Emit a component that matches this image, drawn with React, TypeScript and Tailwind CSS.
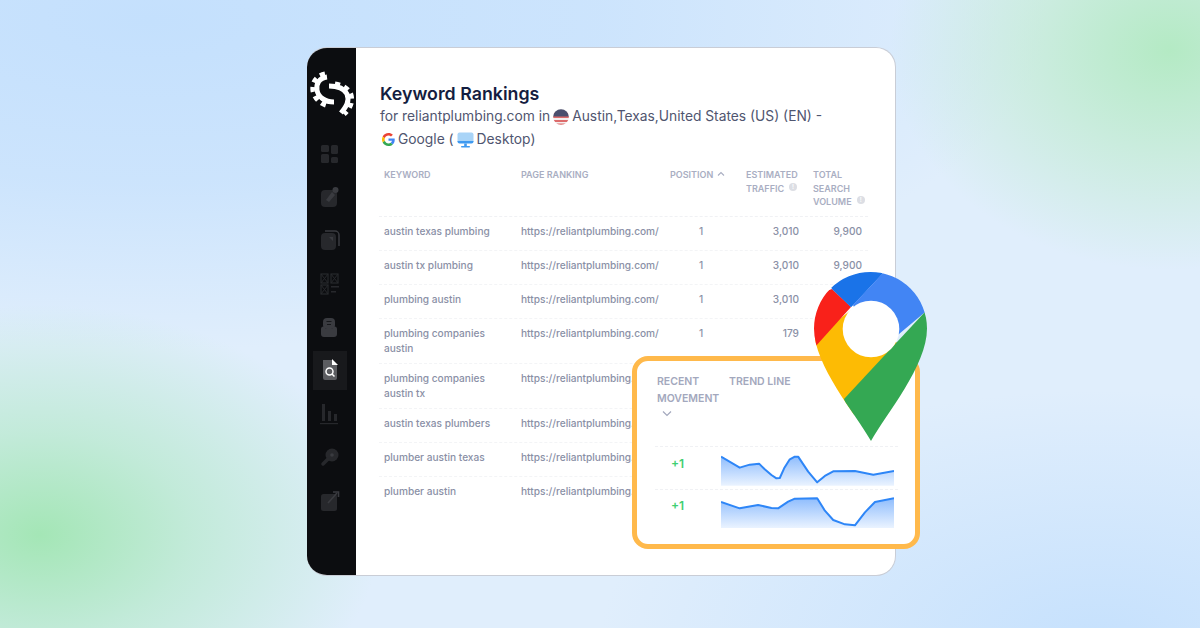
import React from "react";

const rows: [string[], string, string, string][] = [
  [["austin texas plumbing"], "1", "3,010", "9,900"],
  [["austin tx plumbing"], "1", "3,010", "9,900"],
  [["plumbing austin"], "1", "3,010", ""],
  [["plumbing companies", "austin"], "1", "179", ""],
  [["plumbing companies", "austin tx"], "", "", ""],
  [["austin texas plumbers"], "", "", ""],
  [["plumber austin texas"], "", "", ""],
  [["plumber austin"], "", "", ""],
];

function Info() {
  return (
    <span className="inline-flex w-[8px] h-[8px] rounded-full bg-[#dcdee4] text-white text-[6px] leading-[8px] justify-center ml-[5px] align-[3px]">!</span>
  );
}

function Logo() {
  return (
    <svg width="46" height="48" viewBox="309 70 46 48">
      <g fill="none" stroke="#fff">
        <path d="M327 76 C319 77 316 83 317 89 C318 96 325 101 334 101" strokeWidth="5" />
        <path d="M325 73 C315 75 312 83 313 90 C315 98 321 104 330 105" strokeWidth="5" strokeDasharray="5 4.500" />
        <path d="M329 85 C337 85 344 87 347 93 C350 100 346 106 341 112" strokeWidth="5" />
        <path d="M335 83 C343 84 349 88 351 94 C353 101 350 108 344 113" strokeWidth="5" strokeDasharray="5 4.500" />
      </g>
    </svg>
  );
}

function NavIcon({ children, active }: { children: React.ReactNode; active?: boolean }) {
  return (
    <div className={"w-[34px] h-[39px] flex items-center justify-center " + (active ? "bg-[#18191c]" : "")}>
      <svg width="20" height="22" viewBox="0 0 20 22">{children}</svg>
    </div>
  );
}

const c = "#27282c";
const h = "#3a3b40";

function Sidebar() {
  return (
    <div className="w-[49px] shrink-0 bg-[#0c0d10] flex flex-col items-center">
      <div className="mt-[23px] mb-[15px]"><Logo /></div>
      <div className="flex flex-col items-center gap-[4.400px] pr-[3px]">
        <NavIcon>
          <rect x="1" y="2" width="8" height="7" rx="1.500" fill={c} />
          <rect x="11" y="2" width="7" height="9" rx="1.500" fill={c} />
          <rect x="1" y="11" width="8" height="9" rx="1.500" fill={c} />
          <rect x="11" y="14" width="7" height="6" rx="1.500" fill={c} />
        </NavIcon>
        <NavIcon>
          <rect x="1" y="4" width="16" height="17" rx="4" fill={c} />
          <path d="M6 14 L12 6 L15 9 L9 16 Z" fill={h} />
          <circle cx="15.500" cy="4" r="3" fill={h} />
        </NavIcon>
        <NavIcon>
          <rect x="1" y="4" width="15" height="17" rx="4" fill={c} />
          <path d="M5 2 H15 A4 4 0 0 1 19 6 V17" fill="none" stroke={h} strokeWidth="1.500" />
          <path d="M9 8 L13 8 L13 12 Z" fill={h} />
        </NavIcon>
        <NavIcon>
          <rect x="1" y="1" width="7" height="9" fill="none" stroke={c} strokeWidth="1.200" />
          <path d="M1 1 L8 10 M8 1 L1 10" stroke={c} strokeWidth="1" />
          <rect x="1" y="12" width="7" height="9" fill="none" stroke={c} strokeWidth="1.200" />
          <path d="M1 12 L8 21 M8 12 L1 21" stroke={c} strokeWidth="1" />
          <rect x="11" y="1" width="7" height="9" fill="none" stroke={c} strokeWidth="1.200" />
          <path d="M11 1 L18 10 M18 1 L11 10" stroke={c} strokeWidth="1" />
          <rect x="11" y="13" width="8" height="1.500" fill={c} />
          <rect x="11" y="18" width="5" height="1.500" fill={c} />
        </NavIcon>
        <NavIcon>
          <rect x="3" y="2" width="12" height="11" rx="4" fill={h} />
          <rect x="6.500" y="5" width="5" height="1" fill="#17181b" />
          <rect x="7" y="8" width="4" height="1" fill="#17181b" />
          <path d="M1 13 A2.500 2.500 0 0 1 3.500 10.500 L6 13 H12 L14.500 10.500 A2.500 2.500 0 0 1 17 13 V18 A3 3 0 0 1 14 21 H4 A3 3 0 0 1 1 18 Z" fill={h} />
        </NavIcon>
        <NavIcon active>
          <path d="M3 1 H12 L17 6 V19 A2 2 0 0 1 15 21 H5 A2 2 0 0 1 3 19 Z" fill="#5b5c60" />
          <path d="M12 0 L18 6 H12 Z" fill="#ffffff" />
          <circle cx="9.500" cy="12.500" r="3.500" fill="none" stroke="#fff" strokeWidth="1.500" />
          <path d="M12 15 L14.500 17.500" stroke="#fff" strokeWidth="1.500" />
        </NavIcon>
        <NavIcon>
          <rect x="2" y="1" width="3" height="17" fill={c} />
          <rect x="8" y="8" width="3" height="10" fill={c} />
          <rect x="14" y="11" width="3" height="7" fill={c} />
          <rect x="0" y="20" width="18" height="1.200" fill={c} />
        </NavIcon>
        <NavIcon>
          <circle cx="12" cy="9" r="6.500" fill={c} />
          <circle cx="12" cy="9" r="1.800" fill={h} />
          <path d="M8 13 L3 18" stroke={c} strokeWidth="3.500" strokeLinecap="round" />
        </NavIcon>
        <NavIcon>
          <rect x="1" y="4" width="16" height="17" rx="2.500" fill={c} />
          <path d="M8 13 L17 3" stroke={h} strokeWidth="1.600" />
          <path d="M13 2 H18.500 V7" fill="none" stroke={h} strokeWidth="1.600" />
        </NavIcon>
      </div>
    </div>
  );
}

function Flag() {
  return (
    <svg width="16" height="16" viewBox="0 0 16 16" className="mx-[3px] shrink-0">
      <defs><clipPath id="f"><circle cx="8" cy="8" r="7.800" /></clipPath></defs>
      <g clipPath="url(#f)">
        <rect width="16" height="16" fill="#f3eeee" />
        <rect y="3" width="16" height="2" fill="#dd6b6b" />
        <rect y="7" width="16" height="2" fill="#dd6b6b" />
        <rect y="11" width="16" height="2" fill="#dd6b6b" />
        <rect y="14.500" width="16" height="2" fill="#dd6b6b" />
        <rect width="16" height="7.500" fill="#4a4f6e" />
      </g>
    </svg>
  );
}

function GoogleG() {
  return (
    <svg width="13" height="13" viewBox="0 0 48 48" className="shrink-0 mr-[3px] ml-[2px]">
      <path fill="#EA4335" d="M24 9.500c3.540 0 6.710 1.220 9.210 3.600l6.850-6.850C35.900 2.380 30.470 0 24 0 14.620 0 6.510 5.380 2.560 13.220l7.980 6.190C12.430 13.720 17.740 9.500 24 9.500z" />
      <path fill="#4285F4" d="M46.980 24.550c0-1.570-.150-3.090-.380-4.550H24v9.020h12.940c-.580 2.960-2.260 5.480-4.780 7.180l7.730 6c4.510-4.180 7.090-10.360 7.090-17.650z" />
      <path fill="#FBBC05" d="M10.530 28.590c-.480-1.450-.760-2.990-.760-4.590s.270-3.140.760-4.590l-7.980-6.190C.920 16.460 0 20.120 0 24c0 3.880.920 7.540 2.560 10.780l7.970-6.190z" />
      <path fill="#34A853" d="M24 48c6.480 0 11.930-2.130 15.890-5.810l-7.730-6c-2.150 1.450-4.920 2.300-8.160 2.300-6.260 0-11.570-4.220-13.470-9.910l-7.980 6.190C6.510 42.620 14.620 48 24 48z" />
    </svg>
  );
}

function Monitor() {
  return (
    <svg width="17" height="16" viewBox="0 0 17 16" className="mx-[3px] shrink-0">
      <rect x="0.500" y="0.500" width="16" height="10.500" rx="2" fill="#a9d4f7" />
      <path d="M0.500 9 H16.500 V9.500 A2 2 0 0 1 14.500 11.500 H2.500 A2 2 0 0 1 0.500 9.500 Z" fill="#3f9af0" />
      <rect x="7.200" y="11.500" width="2.600" height="2.500" fill="#3f9af0" />
      <rect x="4" y="14" width="9" height="1.500" rx="0.700" fill="#3f9af0" />
    </svg>
  );
}

function Table() {
  const grid = "grid grid-cols-[137px_149px_76px_67px_55px]";
  return (
    <div className="mt-[6px] w-[489px] ml-[-1px] text-[#8a90a6] text-[10.150px] font-medium">
      <div className={grid + " pl-[5px] h-[60px] border-b border-dashed border-[#f0f1f4] text-[#a9aec2] text-[9px] font-semibold leading-[13.500px] pt-[11px]"}>
        <div>KEYWORD</div>
        <div>PAGE RANKING</div>
        <div className="flex items-start">POSITION
          <svg width="8" height="6" viewBox="0 0 8 6" className="ml-[4px] mt-[3px]"><path d="M1 4.500 L4 1.500 L7 4.500" fill="none" stroke="#a9aec2" strokeWidth="1.100" /></svg>
        </div>
        <div>ESTIMATED<br />TRAFFIC<Info /></div>
        <div>TOTAL<br />SEARCH<br />VOLUME<Info /></div>
      </div>
      {rows.map((r, i) => (
        <div key={i} className={grid + " pl-[5px] pt-[7px] items-start border-b border-dashed border-[#f3f4f6] last:border-b-0 leading-[15px] " + (r[0].length > 1 ? "h-[45px]" : "h-[34px]")}>
          <div>{r[0].map((t) => <div key={t}>{t}</div>)}</div>
          <div>https://reliantplumbing.com/</div>
          <div className="pl-[29px]">{r[1]}</div>
          <div className="text-right pr-[14px]">{r[2]}</div>
          <div className="text-right pr-[6px]">{r[3]}</div>
        </div>
      ))}
    </div>
  );
}

const chartA = [[289,320],[345,353],[375,344],[403,341],[420,358],[440,375],[455,385],[465,384],[478,355],[495,328],[510,320],[520,320],[550,365],[577,397],[600,378],[625,364],[690,363],[745,374],[807,363]];
const chartB = [[289,459],[345,478],[400,468],[440,477],[460,478],[490,458],[510,449],[577,448],[600,485],[625,513],[660,526],[690,529],[720,490],[750,459],[807,448]];

function Spark({ pts, id, top, bottom }: { pts: number[][]; id: string; top: number; bottom: number }) {
  const line = pts.map((p) => p.join(",")).join(" ");
  return (
    <svg width="173" height={(bottom - top) / 3} viewBox={`289 ${top} 518 ${bottom - top}`} preserveAspectRatio="none" className="block">
      <defs>
        <linearGradient id={id} x1="0" y1="0" x2="0" y2="1">
          <stop offset="0" stopColor="#8fbdfd" />
          <stop offset="1" stopColor="#eaf3ff" />
        </linearGradient>
      </defs>
      <polygon points={`289,${bottom} ${line} 807,${bottom}`} fill={`url(#${id})`} />
      <polyline points={line} fill="none" stroke="#2e86f7" strokeWidth="6" strokeLinejoin="round" />
    </svg>
  );
}

function Popup() {
  return (
    <div className="absolute left-[632px] top-[356px] w-[288px] h-[193px] rounded-[16px] border-[5px] border-[#ffb94b] bg-white text-[#a3a8bd] font-semibold text-[10.500px] leading-[16.500px]">
      <div className="flex pl-[20px] pt-[13px] h-[86px] ml-[18px] mr-[17px] -mx-0 border-b border-dashed border-[#f0f1f4]">
        <div className="w-[72px] ml-[-18px]">RECENT<br />MOVEMENT
          <svg width="10" height="7" viewBox="0 0 10 7" className="ml-[5px] mt-[3px]"><path d="M1 1.500 L5 5.500 L9 1.500" fill="none" stroke="#a3a8bd" strokeWidth="1.200" /></svg>
        </div>
        <div>TREND LINE</div>
      </div>
      <div className="flex items-start h-[43px] pt-[7px] ml-[18px] mr-[17px] border-b border-dashed border-[#f0f1f4]">
        <div className="w-[66px] pl-[16px] pt-[2px] text-[#3fcf72] text-[12px] font-semibold">+1</div>
        <Spark pts={chartA} id="ga" top={312} bottom={407} />
      </div>
      <div className="flex items-start h-[43px] pt-[6px] ml-[18px]">
        <div className="w-[66px] pl-[16px] pt-[2px] text-[#3fcf72] text-[12px] font-semibold">+1</div>
        <Spark pts={chartB} id="gb" top={441} bottom={537} />
      </div>
    </div>
  );
}

function Pin() {
  return (
    <svg width="115" height="171" viewBox="813 271 115 171" className="absolute left-[813px] top-[271px]">
      <defs>
        <clipPath id="pin"><path d="M871 441 C856 414 814 366 814 328.500 A56.500 56.500 0 0 1 927 328.500 C927 366 886 414 871 441 Z" /></clipPath>
      </defs>
      <g clipPath="url(#pin)">
        <polygon points="800,350 851,310 900,345 850,420 820,430" fill="#fdbb04" />
        <polygon points="832,289 851,307 815,347 800,345 800,300" fill="#f9211a" />
        <polygon points="832,289 882,272 882,274 853,305 851,307" fill="#1a73e8" />
        <polygon points="826,283 860,262 882,262 882,274 853,305 851,307" fill="#1a73e8" />
        <polygon points="882,274 886,262 945,262 945,300 924,313 880,350 865,330 853,305" fill="#4285f4" />
        <polygon points="844,399 924,313 945,295 945,450 860,450" fill="#34a853" />
      </g>
      <circle cx="871" cy="329" r="28.300" fill="#fff" />
    </svg>
  );
}

export default function App() {
  return (
    <div
      className="relative w-[1200px] h-[628px] overflow-hidden flex items-start bg-[#e0eefc] bg-[radial-gradient(ellipse_340px_230px_at_40px_535px,#a4e6b6_0%,rgba(175,232,195,0.6)_45%,rgba(200,235,225,0)_100%),radial-gradient(ellipse_280px_220px_at_1170px_50px,#b4eac4_0%,rgba(190,235,205,0.6)_50%,rgba(205,235,225,0)_100%),radial-gradient(ellipse_900px_330px_at_150px_20px,#c4e0fd_0%,rgba(196,224,253,0.7)_50%,rgba(196,224,253,0)_100%),radial-gradient(ellipse_500px_250px_at_1100px_640px,#c6e1fd_0%,rgba(198,225,253,0)_100%)]"
      style={{ fontFamily: "Inter, 'Noto Sans', sans-serif" }}
    >
      <div className="ml-[307px] mt-[47px] w-[589px] h-[529px] rounded-[20px] overflow-hidden flex bg-white border border-[#c9cdd6] border-l-0">
        <Sidebar />
        <div className="pl-[24px] pt-[35px] flex-1 min-w-0">
          <div className="text-[17.800px] leading-[22px] font-semibold text-[#141d40]">Keyword Rankings</div>
          <div className="flex items-center text-[13.800px] leading-[23px] text-[#50556f] whitespace-nowrap">
            for reliantplumbing.com in<Flag />Austin,Texas,United States (US) (EN) -
          </div>
          <div className="flex items-center text-[13.800px] leading-[23px] text-[#50556f] whitespace-nowrap">
            <GoogleG />Google (<Monitor />Desktop)
          </div>
          <Table />
        </div>
      </div>
      <Popup />
      <Pin />
    </div>
  );
}
